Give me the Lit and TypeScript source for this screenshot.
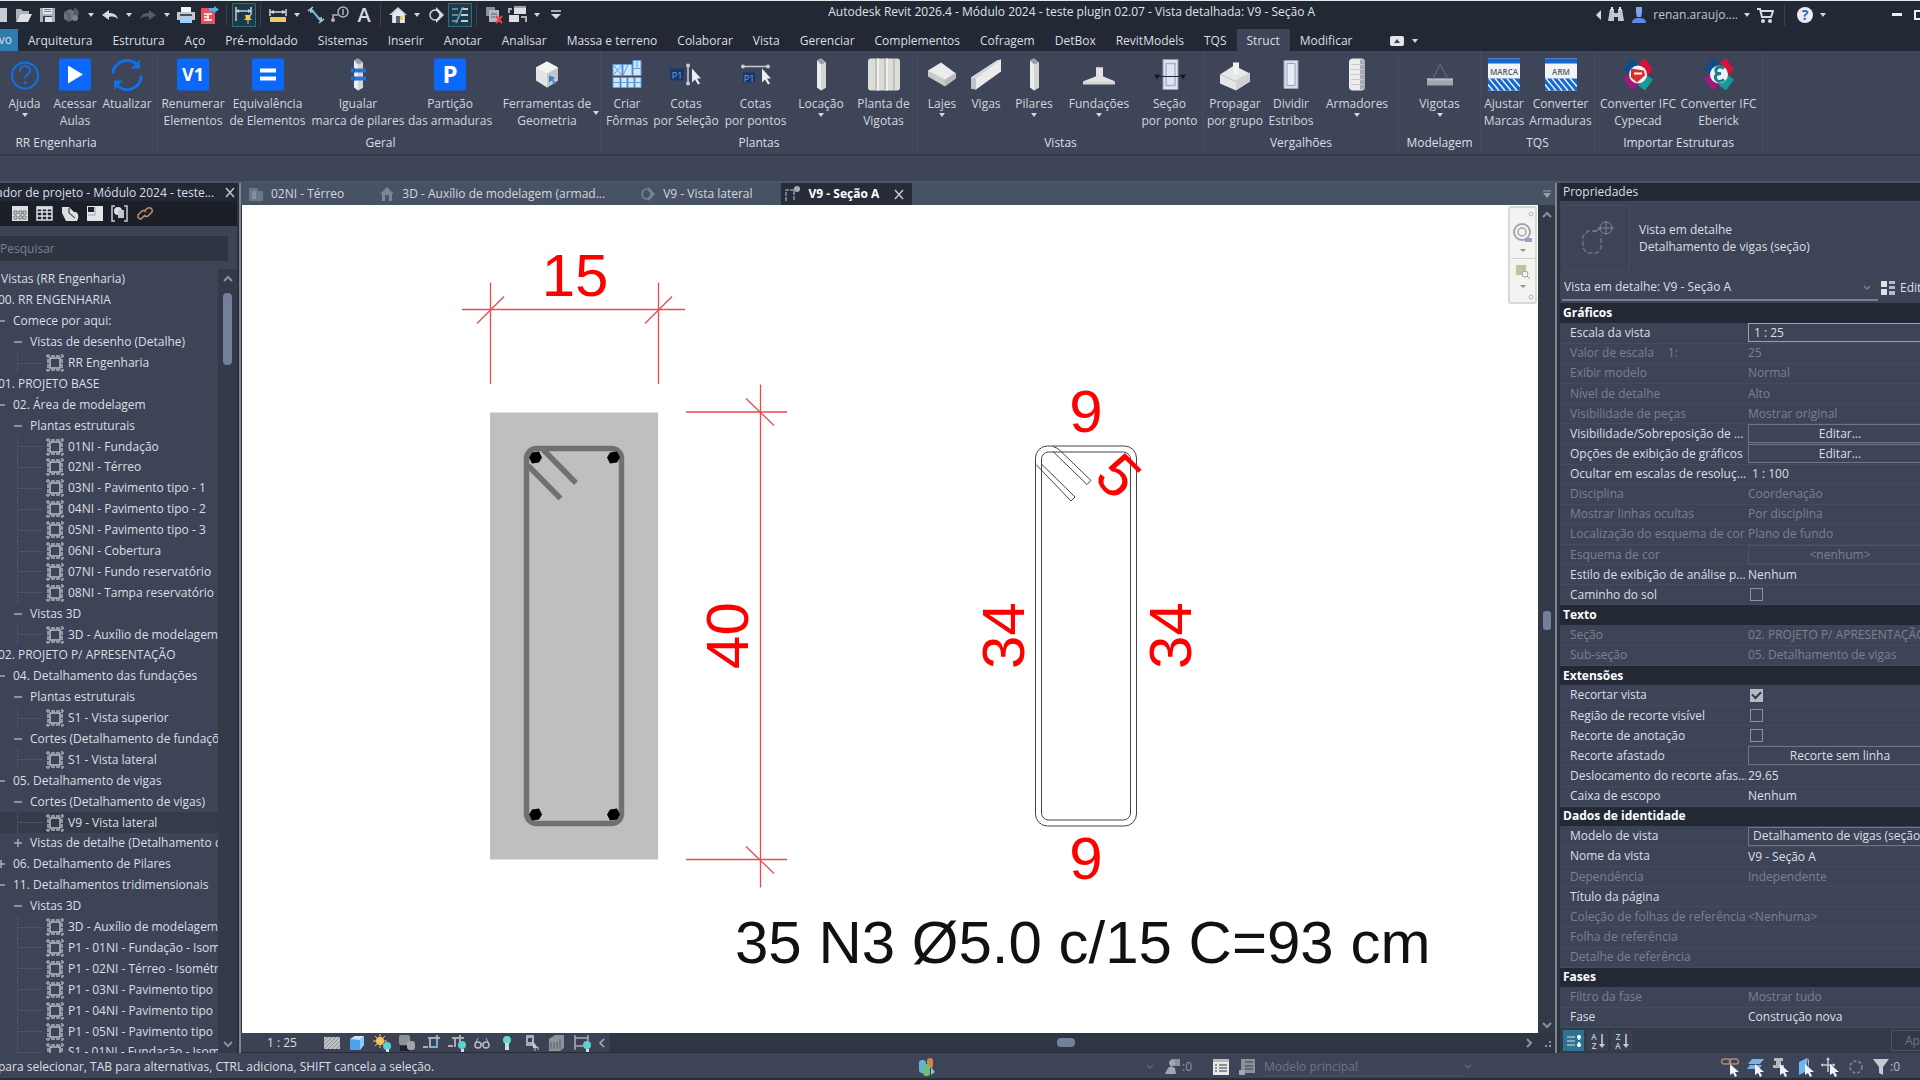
import { LitElement, html, svg, css, nothing } from "lit";
import { customElement } from "lit/decorators.js";
import { classMap } from "lit/directives/class-map.js";

/* ---------- icons ---------- */

const glyph = (w: number, h: number, body: unknown) =>
  html`<svg class="glyph" width=${w} height=${h} viewBox="0 0 ${w} ${h}" aria-hidden="true">${body}</svg>`;

const caret = () => glyph(6, 4, svg`<path d="M0 0h6L3 4z" fill="#d4d8df"/>`);

const q = {
  fresh: glyph(18, 18, svg`<path d="M4 2h9v14H4z" fill="#c9ccd2"/>`),
  open: glyph(18, 18, svg`<path d="M1 3h5l2 2h6v3H5l-4 7z" fill="#aeb3ba"/><path d="M5 8h12l-4 8H1z" fill="#dfe1e4"/>`),
  save: glyph(18, 18, svg`<path d="M1 2h15v14H1z" fill="#a9aeb6"/><path d="M4 2h9v6H4z" fill="#e4e6e8"/><path d="M5 3.500h7M5 5.500h7" stroke="#777d87"/><path d="M4 10h9v6H4z" fill="#3b414c"/><path d="M6 11h7v5H6z" fill="#dfe1e4"/>`),
  cube: glyph(20, 18, svg`<path d="M2 6l6-3 4 2v8l-5 3-5-3z" fill="#6c727d"/><path d="M12 2a5 5 0 0 1 4 8l-4 3V5z" fill="#545a66"/><path d="M2 6l5 2v8" stroke="#454b57" fill="none"/><circle cx="13" cy="12" r="3" fill="#7d838d"/>`),
  undo: glyph(18, 18, svg`<path d="M1 9l7-5v3c5 0 8 2 9 6-2-2-5-3-9-2v3z" fill="#d6d9de"/>`),
  redo: glyph(18, 18, svg`<path d="M17 9l-7-5v3c-5 0-8 2-9 6 2-2 5-3 9-2v3z" fill="#565c68"/>`),
  print: glyph(20, 20, svg`<path d="M5 2h10v6H5z" fill="#f1f3f5"/><path d="M1 7h18v8H1z" fill="#c4c8ce"/><path d="M4 9h12v2H4z" fill="#4b515c"/><path d="M4 12h12v6H4z" fill="#9ad2fb"/>`),
  pdf: glyph(20, 20, svg`<path d="M1 3h10l4 4v12H1z" fill="#e9505a"/><path d="M4 9h8M4 12h5M4 15h8M8 9v6" stroke="#fff" stroke-width="1.500"/><path d="M9 3h5V1l5 3.500-5 3.500V6H9z" fill="#4fb2ee"/>`),
  dim: glyph(20, 20, svg`<path d="M2 2v14M17 2v8M2 6h15" stroke="#c9cdd3" stroke-width="1.500" fill="none"/><path d="M2 6l3-2v4zM17 6l-3-2v4z" fill="#c9cdd3"/><path d="M11 10h6l-1 3 2 2h-8l2-2z" fill="#f5cf52"/><path d="M14 15v4" stroke="#f5cf52"/>`),
  measure: glyph(20, 18, svg`<path d="M2 3v7M18 3v7M3 6h14" stroke="#d6d9de" stroke-width="1.500"/><path d="M2 6l4-2v4zM18 6l-4-2v4z" fill="#d6d9de"/><path d="M2 11h16v5H2z" fill="#f0c860"/>`),
  align: glyph(18, 18, svg`<path d="M4 3l10 12" stroke="#6fb6dc" stroke-width="2"/><path d="M1 5l5-4M12 17l5-4" stroke="#c9cdd3" stroke-width="1.500"/><path d="M3 2l4 4-4 1zM15 16l-4-4 4-1z" fill="#8cc5e3"/>`),
  tag: glyph(20, 18, svg`<circle cx="13" cy="6" r="5" fill="none" stroke="#aeb3ba" stroke-width="1.500"/><path d="M13 3v6" stroke="#aeb3ba" stroke-width="1.500"/><path d="M3 15V9h5" stroke="#aeb3ba" fill="none" stroke-width="1.500"/><circle cx="3" cy="14" r="2" fill="#aeb3ba"/>`),
  letter: glyph(18, 18, svg`<text x="9" y="16" text-anchor="middle" font-family="Open Sans, sans-serif" font-size="20" font-weight="600" fill="#d6d9de">A</text>`),
  home: glyph(20, 20, svg`<path d="M10 2l9 8h-2v8H4v-8H1z" fill="#c9ccd1"/><path d="M10 4l6 5v9H5V9z" fill="#e8e9eb"/><path d="M8 11h4v7H8z" fill="#5b616c"/><path d="M12 11h3v4h-3z" fill="#f0cd62"/>`),
  section: glyph(18, 18, svg`<circle cx="8" cy="9" r="5" fill="none" stroke="#d6d9de" stroke-width="1.500"/><path d="M9 1l8 8-8 8v-3l4-5-4-5z" fill="#d6d9de"/>`),
  thin: glyph(20, 20, svg`<path d="M2 4h6M2 10h6M2 16h6" stroke="#c9cdd3"/><path d="M11 4h7M11 10h7M11 16h7" stroke="#c9cdd3" stroke-width="2"/><path d="M13 2L6 18" stroke="#57a7d6" stroke-width="1.500"/>`),
  closeWin: glyph(20, 20, svg`<path d="M2 2h9v9H2z" fill="#8c929c"/><path d="M5 5h10v12H5z" fill="#b4b8bf"/><path d="M7 9h6M7 12h4" stroke="#5b616c"/><path d="M12 11l6 7M18 11l-6 7" stroke="#e5434d" stroke-width="2"/>`),
  switchWin: glyph(20, 20, svg`<path d="M6 1h12v8H6z" fill="#dcdee1"/><path d="M1 10h10v7H1z" fill="#dcdee1"/><path d="M13 12h5v5M1 8V4h3" stroke="#aeb3ba" stroke-width="2" fill="none"/><path d="M6 1h12v2H6z" fill="#9ca1aa"/>`),
  custom: glyph(10, 10, svg`<path d="M0 1h10" stroke="#d6d9de" stroke-width="1.500"/><path d="M0 4h10L5 9z" fill="#d6d9de"/>`),
};

const u = {
  left: glyph(6, 10, svg`<path d="M6 0v10L1 5z" fill="#d6d9de"/>`),
  search: glyph(18, 18, svg`<path d="M3 3h4v4h4V3h4l2 12h-6v-4H7v4H1z" fill="#c3c7cd"/><path d="M4 1h2v3H4zM12 1h2v3h-2z" fill="#e5e7ea"/>`),
  user: glyph(16, 18, svg`<path d="M5 1h6v6l-1 4H6L5 7z" fill="#7ca3f0"/><path d="M1 17c0-4 3-5 7-5s7 1 7 5z" fill="#5d8ae6"/>`),
  cart: glyph(18, 18, svg`<path d="M1 3h3l2 8h9l2-6H5" fill="none" stroke="#d6d9de" stroke-width="2"/><circle cx="7" cy="15" r="2" fill="#d6d9de"/><circle cx="14" cy="15" r="2" fill="#d6d9de"/>`),
  help: glyph(18, 18, svg`<circle cx="9" cy="9" r="8" fill="#e9edf5"/><text x="9" y="14" text-anchor="middle" font-family="Open Sans, sans-serif" font-size="14" font-weight="700" fill="#3565c4">?</text>`),
  min: glyph(10, 4, svg`<path d="M0 0h10v3H0z" fill="#eceef0"/>`),
  max: glyph(10, 10, svg`<path d="M1 1h8v8H1z" fill="none" stroke="#eceef0" stroke-width="2"/>`),
};

const tile = (body: unknown) => svg`<rect width="32" height="32" rx="2" fill="#0a69fb"/>${body}`;
const tileText = (t: string, size: number) =>
  tile(svg`<text x="16" y=${16 + size * 0.36} text-anchor="middle" font-family="Open Sans, sans-serif" font-weight="700" font-size=${size} fill="#fff">${t}</text>`);
const column = svg`<path d="M12 2l4-2 5 4v25l-5 3-4-3z" fill="#eceded"/><path d="M16 5l5-1v25l-5 3z" fill="#d3d5d6"/><path d="M12 2l4-2 5 4-5 2z" fill="#9b9fa5"/>`;
const pointer = svg`<path d="M22 10v14l3-3 3 5 2-1-3-5h4z" fill="#e8eef5"/>`;
const tqs = (t: string) => svg`<path d="M0 0h32v32H0z" fill="#f2f4f6"/><path d="M0 0h32v5H0z" fill="#1467cf"/>
  <text x="16" y="16" text-anchor="middle" font-family="Open Sans, sans-serif" font-weight="600" font-size="8" fill="#555b66">${t}</text>
  <path d="M0 20h32v12H0z" fill="#1467cf"/><path d="M1 20l10 12M7 20l10 12M13 20l10 12M19 20l10 12M25 20l7 8M0 26l5 6" stroke="#e8effa" stroke-width="1.500"/>`;
const ifc = (body: unknown) => svg`<path d="M1 11L9 0l7 4-7 12z" fill="#0f4c8c"/><path d="M17 4l6-4 8 11-6 6z" fill="#d9103c"/>
  <path d="M1 20l6-4 9 10-6 6z" fill="#a3177f"/><path d="M16 27l8-11 7 5-8 11z" fill="#159a97"/><circle cx="16" cy="16" r="9" fill="#eef2f3"/>${body}`;

const r = {
  help: svg`<circle cx="16" cy="17" r="13" fill="none" stroke="#0d72ea" stroke-width="2"/><path d="M11 13c0-7 10-7 10-1 0 4-5 4-5 8" fill="none" stroke="#0d72ea" stroke-width="2"/><circle cx="16" cy="24" r="1.500" fill="#0d72ea"/>`,
  play: tile(svg`<path d="M9 7l15 9-15 9z" fill="#fff"/>`),
  refresh: svg`<path d="M2 15A14 13 0 0 1 26 6M30 17A14 13 0 0 1 6 27" fill="none" stroke="#0d72ea" stroke-width="3"/><path d="M29 1v9h-9zM3 31v-9h9z" fill="#0d72ea"/>`,
  v1: tileText("V1", 18),
  equal: tile(svg`<path d="M8 10h16v4H8zM8 18h16v4H8z" fill="#fff"/>`),
  match: svg`${column}<path d="M9 10h15v4H9zM9 18h15v4H9z" fill="#2a72cf"/><path d="M11 10h2v4h-2zM11 18h2v4h-2z" fill="#1d5db2"/>`,
  part: tileText("P", 24),
  geometry: svg`<path d="M5 9l11-6 11 6v13l-11 7-11-7z" fill="#e3e4e5"/><path d="M16 15l11-6v13l-11 7z" fill="#c3c5c7"/><path d="M5 9l11-6 11 6-11 6z" fill="#f3f3f3"/><path d="M18 17l6 2-2 2 3 4-2 1-2-4-3 2z" fill="#3a7fd4"/>`,
  forms: svg`<path d="M2 6h9v11H2zM12 6h9v11h-9zM22 2h8v15h-8zM2 19h7v10H2zM10 19h6v10h-6zM17 19h6v10h-6zM24 19h6v10h-6z" fill="#cfe6fb" stroke="#5f9fe0"/><path d="M2 6l9 11M11 6L2 17M17 6l-5 11M22 10h8M2 24h28M26 2v8" stroke="#5f9fe0" fill="none"/>`,
  dimSel: svg`<path d="M0 10h14v12H0z" fill="#15396f"/><text x="7" y="20" text-anchor="middle" font-family="Open Sans, sans-serif" font-size="9" fill="#7da3d8">P1</text><path d="M18 7v18" stroke="#c9cdd3" stroke-width="1.500"/><circle cx="18" cy="7" r="2" fill="#c9cdd3"/><circle cx="18" cy="25" r="2" fill="#c9cdd3"/>${pointer}`,
  dimPts: svg`<path d="M3 14h12v10H3z" fill="#15396f"/><text x="9" y="23" text-anchor="middle" font-family="Open Sans, sans-serif" font-size="9" fill="#7da3d8">P1</text><path d="M3 8h26" stroke="#c9cdd3" stroke-width="1.500"/><circle cx="3" cy="8" r="2" fill="#c9cdd3"/><circle cx="28" cy="8" r="2" fill="#c9cdd3"/>${pointer}`,
  column,
  slab: svg`<rect width="32" height="32" rx="3" fill="#dcdcd9"/><path d="M8 0v32M17 0v32M26 0v32" stroke="#a6a6a3"/><path d="M10 0v32M19 0v32" stroke="#f0f0ee" stroke-width="2"/>`,
  plate: svg`<path d="M2 12l13-8 15 11v3l-11 9L2 17z" fill="#ececec"/><path d="M2 12l17 9v7L2 18z" fill="#c9cacb"/><path d="M19 21l11-7v6l-11 8z" fill="#b9bbbd"/>`,
  beam: svg`<path d="M1 19L27 2l4-1v12L6 31l-5-1z" fill="#ebebeb"/><path d="M1 19l5 1v11l-5-1z" fill="#bfc1c4"/><path d="M1 19L27 2l4-1-25 19z" fill="#d4d5d6"/>`,
  footing: svg`<path d="M13 9h7v9l12 5v3H0v-3l13-5z" fill="#d5d6d3"/><path d="M13 9h7v9l12 5H0l13-5z" fill="#e3e4e0"/>`,
  cut: svg`<path d="M9 1h15v30H9z" fill="#dfe5ee" stroke="#8e9ab0"/><path d="M12 5h9v22h-9z" fill="none" stroke="#9db3d6" stroke-width="1.500"/><path d="M2 18h28" stroke="#22262e"/><path d="M0 16h6l-3 5zM26 16h6l-3 5z" fill="#15181e"/>`,
  spread: svg`<path d="M1 16l14-9 16 8v8l-14 9L1 25z" fill="#e6e7e8"/><path d="M17 22l14-8v9l-14 8z" fill="#cfd1d3"/><path d="M14 4h6v12h-6z" fill="#f2f2f2"/><path d="M1 16l16 7" stroke="#bfc2c5" fill="none"/>`,
  split: svg`<path d="M9 2h14v28H9z" fill="#d9dfea" stroke="#9aa4b5"/><path d="M12 5h8v22h-8z" fill="#e9edf4" stroke="#8fa3c6"/>`,
  rebar: svg`<rect x="8" width="16" height="32" rx="4" fill="#ececec"/><path d="M19 1h3c2 1 2 2 2 3v24c0 2-1 3-3 3h-2z" fill="#a9acb0"/><path d="M10 6h13M10 11h13M10 16h13M10 21h13M10 26h13" stroke="#c6c8cb"/>`,
  joist: svg`<path d="M3 20h26v7H3z" fill="#a3a6a8"/><path d="M3 20h26v2H3z" fill="#b9bbbd"/><path d="M9 20l7-14 8 14" stroke="#5c6272" fill="none" stroke-width="1.500"/>`,
  marca: tqs("MARCA"),
  arm: tqs("ARM"),
  cype: ifc(svg`<path d="M9 10l13 2 1 5-8 7-6-5z" fill="#d3322f"/><path d="M12 15h8" stroke="#fff" stroke-width="2"/>`),
  eberick: ifc(svg`<path d="M21 10c-4-3-9-1-8 3 0 2 3 2 5 2-4 0-7 2-5 6 2 3 6 2 8 0" fill="none" stroke="#17818a" stroke-width="3"/>`),
};

const v = {
  hatch: glyph(18, 14, svg`<path d="M1 1h16v12H1z" fill="#bfc1c4"/><path d="M1 5l4-4M1 9l8-8M1 13L13 1M5 13L17 1M9 13l8-8M13 13l4-4" stroke="#8b8e93"/>`),
  box: glyph(18, 18, svg`<path d="M2 5l5-3h9v9l-4 5H2z" fill="#4aa3ec"/><path d="M2 5l5-3h9l-4 4z" fill="#c7e6fd"/><path d="M12 6l4-4v9l-4 5z" fill="#8fc8f6"/>`),
  sun: glyph(18, 18, svg`<circle cx="7" cy="7" r="4" fill="#f2c65c"/><path d="M7 0v14M0 7h14M2 2l10 10M12 2L2 12" stroke="#f2c65c"/><circle cx="14" cy="12" r="4" fill="#5fd0cf"/><path d="M13 15h3v3h-3z" fill="#d9dcdf"/>`),
  shade: glyph(18, 18, svg`<rect x="1" y="1" width="11" height="10" rx="2" fill="#8e9196"/><path d="M2 12h10v5H2z" fill="#1d2129"/><rect x="9" y="7" width="8" height="9" rx="3" fill="#a0a3a8"/>`),
  crop: glyph(18, 18, svg`<path d="M5 4h12M7 3v10h8M14 1v12M5 13H0" stroke="#a9adb4" stroke-width="2" fill="none"/><path d="M14 6v7H8" stroke="#59b4e4" fill="none" stroke-width="1.500"/>`),
  cropOn: glyph(18, 18, svg`<path d="M4 4h12M7 3v10M5 12H0M12 1v7" stroke="#a9adb4" stroke-width="2" fill="none"/><circle cx="14" cy="11" r="4" fill="#5fd0cf"/><path d="M13 15h3v3h-3z" fill="#d9dcdf"/>`),
  glasses: glyph(18, 18, svg`<circle cx="5" cy="11" r="3" fill="none" stroke="#b8bcc2" stroke-width="1.500"/><circle cx="13" cy="11" r="3" fill="none" stroke="#b8bcc2" stroke-width="1.500"/><path d="M3 8l2-4M15 8l-2-4M8 10h2" stroke="#b8bcc2"/>`),
  bulb: glyph(18, 18, svg`<circle cx="9" cy="6" r="4" fill="#6bd6cf"/><path d="M7 9h4v6H7z" fill="#b9e3df"/><path d="M7 13h4v3H7z" fill="#d9dcdf"/>`),
  locked: glyph(18, 18, svg`<path d="M3 1h8v11H3z" fill="#a9adb4"/><path d="M5 4h4v4H5z" fill="#3c4250"/><path d="M9 6l6 8h-5z" fill="#c6c9ce"/><path d="M12 14v3M15 13v3" stroke="#c6c9ce"/>`),
  model: glyph(18, 18, svg`<path d="M1 5l6-4h9v13l-4 3H1z" fill="#8e9299"/><path d="M3 8v7M6 8v7M9 8v7M12 5v10" stroke="#575c67"/>`),
  constrain: glyph(18, 18, svg`<path d="M2 1v15M15 1v6M2 4h13M2 12h8" stroke="#a9adb4" stroke-width="1.500" fill="none"/><circle cx="14" cy="11" r="4" fill="#5fd0cf"/><path d="M13 15h3v3h-3z" fill="#d9dcdf"/>`),
};

const arrow = svg`<path d="M9 7v11l3-2 2 4 2-1-2-4h4z" fill="#f1f3f5"/>`;
const s = {
  links: glyph(20, 20, svg`<path d="M3 2h4a2 2 0 0 1 0 5H3a2 2 0 0 1 0-5M11 2h4a2 2 0 0 1 0 5h-4a2 2 0 0 1 0-5" stroke="#b48a6f" fill="none" stroke-width="1.500"/>${arrow}`),
  under: glyph(20, 20, svg`<path d="M6 2h12l-4 5H2zM4 8h12l-3 4H1z" fill="#74b4ea"/>${arrow}`),
  pinned: glyph(20, 20, svg`<path d="M3 1h9v3h-2v4h3v3H2V8h3V4H3z" fill="#b5b9c0"/>${arrow}`),
  face: glyph(20, 20, svg`<path d="M3 5l8-4v13l-8 4z" fill="#6fb7ef"/><path d="M11 1l2 2v9" fill="#b5b9c0"/>${arrow}`),
  drag: glyph(20, 20, svg`<path d="M7 1v14M0 8h14" stroke="#c6c9ce" stroke-width="1.500"/><path d="M5 3l2-3 2 3zM2 6L0 8l2 2zM12 6l2 2-2 2z" fill="#c6c9ce"/>${arrow}`),
  ring: glyph(20, 20, svg`<circle cx="10" cy="10" r="6" fill="none" stroke="#747a88" stroke-width="2" stroke-dasharray="3 2"/>`),
  funnel: glyph(20, 20, svg`<path d="M2 2h16l-6 8v8l-4-2v-6z" fill="#c6c9ce"/>`),
  people: glyph(18, 20, svg`<rect x="1" y="3" width="7" height="13" rx="3" fill="#6aaede"/><rect x="9" y="1" width="6" height="10" rx="3" fill="#d9814f"/><rect x="5" y="7" width="7" height="12" rx="3" fill="#69c07a"/><path d="M13 10l4 5-4 3z" fill="#a3b7c6"/>`),
  figure: glyph(18, 20, svg`<path d="M7 2h9v7H8z" fill="#8b909b"/><path d="M1 17l3-6 3-2 4 2 1 6z" fill="#a3a7b0"/><circle cx="8" cy="6" r="3" fill="#a3a7b0"/>`),
  sheet: glyph(18, 18, svg`<path d="M1 1h16v16H1z" fill="#e6e8e6"/><path d="M1 1h16v3H1z" fill="#b9bcbc"/><path d="M3 7h2M3 10h2M3 13h2M7 7h8M7 10h8M7 13h8" stroke="#6d7275" stroke-width="1.500"/>`),
  sheetOff: glyph(18, 18, svg`<path d="M3 1h14v14H3z" fill="#8b909b"/><path d="M7 4h8M7 8h8M7 11h8" stroke="#535969" stroke-width="1.500"/><path d="M1 12h6v5H1z" fill="#a3a7b0"/>`),
};

const p = {
  grid: glyph(18, 18, svg`<path d="M1 1h16v15H1z" fill="#dcdedf"/><path d="M3 6h3v3H3zM8 6h3v3H8zM12 6h3v3h-3zM3 11h3v3H3zM8 11h3v3H8zM12 11h3v3h-3z" fill="none" stroke="#6b7078"/>`),
  table: glyph(18, 18, svg`<path d="M1 2h15v13H1z" fill="none" stroke="#dcdedf" stroke-width="1.500"/><path d="M1 3h15" stroke="#dcdedf" stroke-width="3"/><path d="M1 7h15M1 11h15M6 3v12M11 3v12" stroke="#dcdedf" stroke-width="1.500"/>`),
  sheet: glyph(18, 18, svg`<path d="M1 2h7l5 5h2c3 2 3 6 1 9H5L1 8z" fill="#dcdedf"/><path d="M8 3v5l6 5" fill="none" stroke="#1c212b"/>`),
  family: glyph(18, 18, svg`<path d="M1 1h16v15H1z" fill="#e3e4e5"/><path d="M2 2h6v5H2z" fill="#1c212b"/><path d="M9 2v8H2" stroke="#9b9fa5" fill="none"/>`),
  group: glyph(18, 18, svg`<path d="M4 1H1v15h3M13 1h3v15h-3" fill="none" stroke="#c9ccd1" stroke-width="1.500"/><circle cx="7" cy="6" r="4" fill="#dcdedf"/><path d="M7 5h6v8H7z" fill="#c3c6cb"/>`),
  link: glyph(18, 18, svg`<path d="M8 11l-3 3a3 3 0 0 1-3-4l4-4a3 3 0 0 1 4 1M8 6l4-3a3 3 0 0 1 4 4l-4 4a3 3 0 0 1-4-1" stroke="#c28d6d" stroke-width="1.500" fill="none"/>`),
  view: glyph(18, 18, svg`<path d="M4 4h10v10H4z" fill="none" stroke="#b9bdc6" stroke-width="1.500"/><path d="M0 2h18M0 16h18M2 0v18M16 0v18" stroke="#9196a4" stroke-width="2" stroke-dasharray="4 1"/>`),
};

/* ---------- data ---------- */

type Tool = { icon: unknown; lines: string[]; drop?: boolean; side?: boolean };
const t = (icon: unknown, label: string, drop = false, side = false): Tool => ({ icon, lines: label.split("|"), drop, side });

const RIBBON: { key: string; title: string; tools: Tool[] }[] = [
  { key: "rr", title: "RR Engenharia", tools: [t(r.help, "Ajuda", true), t(r.play, "Acessar|Aulas"), t(r.refresh, "Atualizar")] },
  { key: "geral", title: "Geral", tools: [t(r.v1, "Renumerar|Elementos"), t(r.equal, "Equivalência|de Elementos"), t(r.match, "Igualar|marca de pilares"), t(r.part, "Partição|das armaduras"), t(r.geometry, "Ferramentas de|Geometria", false, true)] },
  { key: "plantas", title: "Plantas", tools: [t(r.forms, "Criar|Fôrmas"), t(r.dimSel, "Cotas|por Seleção"), t(r.dimPts, "Cotas|por pontos"), t(r.column, "Locação", true), t(r.slab, "Planta de|Vigotas")] },
  { key: "vistas", title: "Vistas", tools: [t(r.plate, "Lajes", true), t(r.beam, "Vigas"), t(r.column, "Pilares", true), t(r.footing, "Fundações", true), t(r.cut, "Seção|por ponto")] },
  { key: "vergalhoes", title: "Vergalhões", tools: [t(r.spread, "Propagar|por grupo"), t(r.split, "Dividir|Estribos"), t(r.rebar, "Armadores", true)] },
  { key: "modelagem", title: "Modelagem", tools: [t(r.joist, "Vigotas", true)] },
  { key: "tqs", title: "TQS", tools: [t(r.marca, "Ajustar|Marcas"), t(r.arm, "Converter|Armaduras")] },
  { key: "importar", title: "Importar Estruturas", tools: [t(r.cype, "Converter IFC|Cypecad"), t(r.eberick, "Converter IFC|Eberick")] },
];

const TABS = ["Arquitetura", "Estrutura", "Aço", "Pré-moldado", "Sistemas", "Inserir", "Anotar", "Analisar", "Massa e terreno", "Colaborar", "Vista", "Gerenciar", "Complementos", "Cofragem", "DetBox", "RevitModels", "TQS", "Struct", "Modificar"];

type Node = [level: number, label: string, mark?: string];
const TREE: Node[] = [
  [0, "Vistas (RR Engenharia)"], [1, "00. RR ENGENHARIA"], [2, "Comece por aqui:"], [3, "Vistas de desenho (Detalhe)"], [4, "RR Engenharia"],
  [1, "01. PROJETO BASE"], [2, "02. Área de modelagem"], [3, "Plantas estruturais"],
  [4, "01NI - Fundação"], [4, "02NI - Térreo"], [4, "03NI - Pavimento tipo - 1"], [4, "04NI - Pavimento tipo - 2"], [4, "05NI - Pavimento tipo - 3"],
  [4, "06NI - Cobertura"], [4, "07NI - Fundo reservatório"], [4, "08NI - Tampa reservatório"],
  [3, "Vistas 3D"], [4, "3D - Auxílio de modelagem"],
  [1, "02. PROJETO P/ APRESENTAÇÃO"], [2, "04. Detalhamento das fundações"], [3, "Plantas estruturais"], [4, "S1 - Vista superior"],
  [3, "Cortes (Detalhamento de fundações)"], [4, "S1 - Vista lateral"],
  [2, "05. Detalhamento de vigas"], [3, "Cortes (Detalhamento de vigas)"], [4, "V9 - Vista lateral", "on"], [3, "Vistas de detalhe (Detalhamento de vigas)", "+"],
  [2, "06. Detalhamento de Pilares", "+"], [2, "11. Detalhamentos tridimensionais"], [3, "Vistas 3D"],
  [4, "3D - Auxílio de modelagem"], [4, "P1 - 01NI - Fundação - Isométrica"], [4, "P1 - 02NI - Térreo - Isométrica"],
  [4, "P1 - 03NI - Pavimento tipo"], [4, "P1 - 04NI - Pavimento tipo"], [4, "P1 - 05NI - Pavimento tipo"], [4, "S1 - 01NI - Fundação - Isométrica"],
];

type Prop = { name: string; value?: string; kind?: "text" | "button" | "left" | "check" | "select" | "input"; off?: boolean; on?: boolean; unit?: string; pad?: boolean };
const PROPS: { title: string; rows: Prop[] }[] = [
  { title: "Gráficos", rows: [
    { name: "Escala da vista", value: "1 : 25", kind: "select" },
    { name: "Valor de escala", unit: "1:", value: "25", off: true },
    { name: "Exibir modelo", value: "Normal", off: true },
    { name: "Nível de detalhe", value: "Alto", off: true },
    { name: "Visibilidade de peças", value: "Mostrar original", off: true },
    { name: "Visibilidade/Sobreposição de ...", value: "Editar...", kind: "button" },
    { name: "Opções de exibição de gráficos", value: "Editar...", kind: "button" },
    { name: "Ocultar em escalas de resoluç...", value: "1 : 100", pad: true },
    { name: "Disciplina", value: "Coordenação", off: true },
    { name: "Mostrar linhas ocultas", value: "Por disciplina", off: true },
    { name: "Localização do esquema de cor", value: "Plano de fundo", off: true },
    { name: "Esquema de cor", value: "<nenhum>", kind: "button", off: true },
    { name: "Estilo de exibição de análise p...", value: "Nenhum" },
    { name: "Caminho do sol", kind: "check" },
  ] },
  { title: "Texto", rows: [
    { name: "Seção", value: "02. PROJETO P/ APRESENTAÇÃO", off: true },
    { name: "Sub-seção", value: "05. Detalhamento de vigas", off: true },
  ] },
  { title: "Extensões", rows: [
    { name: "Recortar vista", kind: "check", on: true },
    { name: "Região de recorte visível", kind: "check" },
    { name: "Recorte de anotação", kind: "check" },
    { name: "Recorte afastado", value: "Recorte sem linha", kind: "button" },
    { name: "Deslocamento do recorte afas...", value: "29.65", kind: "input" },
    { name: "Caixa de escopo", value: "Nenhum" },
  ] },
  { title: "Dados de identidade", rows: [
    { name: "Modelo de vista", value: "Detalhamento de vigas (seção)", kind: "left" },
    { name: "Nome da vista", value: "V9 - Seção A", kind: "input" },
    { name: "Dependência", value: "Independente", off: true },
    { name: "Título da página", value: "", kind: "input" },
    { name: "Coleção de folhas de referência", value: "<Nenhuma>", off: true },
    { name: "Folha de referência", value: "", off: true },
    { name: "Detalhe de referência", value: "", off: true },
  ] },
  { title: "Fases", rows: [
    { name: "Filtro da fase", value: "Mostrar tudo", off: true },
    { name: "Fase", value: "Construção nova" },
  ] },
];

const base = css`
  * { box-sizing: border-box; }
  :host { font: 12px/16px "Open Sans", "Noto Sans", sans-serif; color: #dcdfe5; }
  button, input, select { font: inherit; color: inherit; background: none; border: 0; margin: 0; padding: 0; border-radius: 0; outline: 0; }
  button { display: flex; align-items: center; justify-content: center; white-space: nowrap; }
  .glyph { display: block; flex: none; }
`;

/* ---------- title bar, tabs and ribbon ---------- */

@customElement("top-bar")
export class TopBar extends LitElement {
  static styles = [base, css`
    :host { display: block; border-top: 1px solid #dfeceb; background: #222934; overflow: hidden; }
    .title { display: flex; align-items: center; height: 28px; }
    .quick { display: flex; align-items: center; flex: none; }
    .quick button { width: 24px; height: 24px; }
    .quick .caret { width: 14px; }
    .quick .cut { width: 12px; overflow: hidden; justify-content: flex-end; }
    .quick .boxed { border: 1px solid #2f6c82; background: #1d3a47; }
    .bar { flex: none; width: 1px; height: 22px; margin: 0 5px 0 4px; background: #3a414d; }
    .name { flex: 1; text-align: center; white-space: nowrap; padding: 0 20px 6px 0; color: #dfe2e7; }
    .user { display: flex; align-items: center; flex: none; gap: 6px; color: #c3c7cf; }
    .user .wide { margin-left: 60px; }
    .user .edge { width: 12px; overflow: hidden; justify-content: flex-start; padding-left: 6px; }
    .tabs { display: flex; height: 22px; align-items: stretch; }
    .tabs button { padding: 1px 10px 0; flex: none; }
    .tabs .file { background: #2f7cae; padding: 0 6px 0 0; width: 18px; justify-content: flex-end; overflow: hidden; }
    .tabs .on { background: #3f4558; }
    .tabs .panel { gap: 8px; padding-left: 28px; }
    .ribbon { display: flex; height: 105px; background: #3f4558; border-bottom: 2px solid #343a49; overflow: hidden; }
    .group { display: grid; grid-template-rows: 84px 16px; flex: none; border-right: 1px solid #464c60; }
    .tools { display: grid; align-items: start; }
    .tool { flex-direction: column; justify-content: flex-start; padding-top: 7px; width: 100%; position: relative; }
    .tool .label { display: block; line-height: 17px; margin-top: 4px; text-align: center; color: #d3d6de; }
    .tool .label span { display: block; }
    .tool .down { margin-top: 1px; }
    .tool .side { position: absolute; right: 1px; bottom: 14px; }
    .caption { text-align: center; }
    .rr { margin-left: -45px; padding-left: 45px; width: 203px; }
    .rr .caption { margin-left: -45px; }
    .rr .tools { grid-template-columns: 49px 52px 52px; }
    .geral { padding-left: 3px; width: 443px; }
    .geral .tools { grid-template-columns: 64px 85px 96px 88px 106px; }
    .plantas .tools { grid-template-columns: 52px 66px 73px 58px 67px; }
    .vistas .tools { grid-template-columns: 48px 40px 56px 74px 67px; }
    .vergalhoes .tools { grid-template-columns: 62px 50px 82px; }
    .modelagem .tools { grid-template-columns: 81px; }
    .tqs .tools { grid-template-columns: 46px 67px; }
    .importar { padding: 0 3px; }
    .importar .tools { grid-template-columns: 80px 81px; }
    .options { height: 27px; background: #3f4558; border-bottom: 2px solid #4c5467; }
  `];

  private quick(icon: unknown, name: string, cls = "") {
    return html`<button class=${cls} aria-label=${name}>${icon}</button>`;
  }
  private more() {
    return this.quick(caret(), "Mais opções", "caret");
  }

  render() {
    return html`
      <header class="title">
        <div class="quick">
          ${this.quick(q.fresh, "Novo", "cut")}${this.quick(q.open, "Abrir")}${this.quick(q.save, "Salvar")}${this.quick(q.cube, "Sincronizar")}${this.more()}
          ${this.quick(q.undo, "Desfazer")}${this.more()}${this.quick(q.redo, "Refazer")}${this.more()}
          ${this.quick(q.print, "Imprimir")}${this.quick(q.pdf, "Exportar PDF")}<i class="bar"></i>
          ${this.quick(q.dim, "Restrições", "boxed")}<i class="bar"></i>
          ${this.quick(q.measure, "Medir")}${this.more()}${this.quick(q.align, "Cota alinhada")}${this.quick(q.tag, "Identificador")}${this.quick(q.letter, "Texto")}<i class="bar"></i>
          ${this.quick(q.home, "Vista 3D")}${this.more()}${this.quick(q.section, "Corte")}${this.quick(q.thin, "Linhas finas", "boxed")}<i class="bar"></i>
          ${this.quick(q.closeWin, "Fechar janelas")}${this.quick(q.switchWin, "Alternar janelas")}${this.more()}${this.quick(q.custom, "Personalizar")}
        </div>
        <div class="name">Autodesk Revit 2026.4 - Módulo 2024 - teste plugin 02.07 - Vista detalhada: V9 - Seção A</div>
        <div class="user">
          <button aria-label="Recolher">${u.left}</button>
          <button aria-label="Pesquisar">${u.search}</button>
          <button aria-label="Conta">${u.user}</button>
          <button>renan.araujo....</button>
          <button aria-label="Menu da conta">${caret()}</button>
          <button aria-label="Loja">${u.cart}</button><i class="bar"></i>
          <button aria-label="Ajuda">${u.help}</button>
          <button aria-label="Menu de ajuda">${caret()}</button>
          <button class="wide" aria-label="Minimizar">${u.min}</button>
          <button class="edge" aria-label="Maximizar">${u.max}</button>
        </div>
      </header>
      <nav class="tabs">
        <button class="file" aria-label="Arquivo">Arquivo</button>
        ${TABS.map((name) => html`<button class=${classMap({ on: name === "Struct" })}>${name}</button>`)}
        <button class="panel" aria-label="Estado da faixa">
          ${glyph(14, 10, svg`<rect width="14" height="10" rx="2" fill="#e3e5e8"/><path d="M4 7l3-4 3 4z" fill="#3c424e"/>`)}${caret()}
        </button>
      </nav>
      <section class="ribbon">
        ${RIBBON.map((g) => html`
          <div class="group ${g.key}">
            <div class="tools">
              ${g.tools.map((x) => html`
                <button class="tool">
                  <svg class="glyph" width="32" height="33" viewBox="0 0 32 32" aria-hidden="true">${x.icon}</svg>
                  <span class="label">${x.lines.map((l) => html`<span>${l}</span>`)}</span>
                  ${x.drop ? html`<span class="down">${caret()}</span>` : nothing}
                  ${x.side ? html`<span class="side">${caret()}</span>` : nothing}
                </button>`)}
            </div>
            <div class="caption">${g.title}</div>
          </div>`)}
      </section>
      <div class="options"></div>`;
  }
}

/* ---------- project browser ---------- */

@customElement("project-browser")
export class ProjectBrowser extends LitElement {
  static styles = [base, css`
    :host { display: flex; flex-direction: column; min-height: 0; overflow: hidden; background: #3e4457; border-right: 2px solid #2b313d; }
    .head { display: flex; align-items: center; justify-content: space-between; height: 18px; background: #222834; padding-right: 2px; padding-top: 1px; white-space: nowrap; }
    .head span { margin-left: -4px; }
    .icons { display: flex; align-items: center; gap: 7px; height: 25px; background: #1a1f28; padding-left: 11px; margin-bottom: 10px; flex: none; }
    .search { flex: none; width: auto; height: 25px; margin: 0 9px 8px 0; background: #2e3441; color: #d9dce2; }
    .search::placeholder { color: #7b8190; opacity: 1; }
    .body { flex: 1; display: flex; min-height: 0; }
    .clip { flex: 1; min-width: 0; overflow: hidden; }
    .tree { list-style: none; margin: 0 0 0 -24px; padding: 0; height: calc(100% + 10px); display: flex; flex-direction: column; }
    .row { flex: 1 1 0; min-height: 0; display: flex; align-items: center; white-space: nowrap; gap: 7px; }
    .l0 { padding-left: 25px; }
    .l1 { padding-left: 22px; }
    .l2 { padding-left: 20px; }
    .l3 { padding-left: 37px; }
    .l4 { padding-left: 41px; gap: 4px; }
    .on { background: #343c4a; }
    .guide { align-self: stretch; width: 25px; border-left: 1px dotted #596072; background: linear-gradient(#4d5467, #4d5467) center / 100% 1px no-repeat; flex: none; }
    .scroll { flex: none; width: 19px; background: #343a47; display: flex; flex-direction: column; align-items: center; padding: 6px 0 5px; }
    .thumb { width: 9px; height: 72px; border-radius: 4px; background: #74809a; margin-top: 11px; margin-bottom: auto; }
  `];

  render() {
    return html`
      <div class="head"><span>ador de projeto - Módulo 2024 - teste...</span>
        <button aria-label="Fechar">${glyph(10, 11, svg`<path d="M1 1l8 9M9 1L1 10" stroke="#c3c7cf" stroke-width="1.500"/>`)}</button></div>
      <div class="icons">${[p.grid, p.table, p.sheet, p.family, p.group, p.link].map((i) => html`<button aria-label="Filtro">${i}</button>`)}</div>
      <input class="search" type="search" placeholder="Pesquisar" aria-label="Pesquisar" />
      <div class="body">
        <div class="clip">
          <ul class="tree">
            ${TREE.map(([level, label, mark]) => html`
              <li class="row l${level} ${mark === "on" ? "on" : ""}">
                ${level === 4 ? html`<i class="guide"></i>${p.view}` : nothing}
                ${level === 2 || level === 3
                  ? glyph(10, 10, svg`<path d=${mark === "+" ? "M1 5h8M5 1v8" : "M1 5h8"} stroke="#a7acb8" stroke-width="1.500"/>`)
                  : nothing}
                <span>${label}</span>
              </li>`)}
          </ul>
        </div>
        <div class="scroll">
          ${glyph(10, 7, svg`<path d="M1 6l4-4 4 4" fill="none" stroke="#8b92a3" stroke-width="2"/>`)}
          <i class="thumb"></i>
          ${glyph(10, 7, svg`<path d="M1 1l4 4 4-4" fill="none" stroke="#8b92a3" stroke-width="2"/>`)}
        </div>
      </div>`;
  }
}

/* ---------- drawing area ---------- */

const bar = (x: number, y: number) =>
  svg`<path d="M${x - 6} ${y}l3 -5l7 -1l3 6l-3 5l-7 1z" fill="#000"/>`;

@customElement("drawing-view")
export class DrawingView extends LitElement {
  static styles = [base, css`
    :host { display: flex; flex-direction: column; min-width: 0; min-height: 0; border-left: 2px solid #7d8494; border-right: 2px solid #7d8494; background: #333a47; }
    .tabs { display: flex; height: 22px; background: #475263; flex: none; align-items: stretch; }
    .tabs button { gap: 7px; justify-content: flex-start; color: #d3d7de; padding-left: 7px; margin-right: 28px; }
    .tabs .on { background: #262d39; color: #fff; font-weight: 700; padding: 0 5px 0 4px; gap: 8px; margin: 0; }
    .tabs .list { margin: 0 4px 0 auto; padding: 0; }
    .middle { flex: 1; display: flex; min-height: 0; }
    .sheet { flex: 1; min-width: 0; position: relative; background: #fff; border-left: 1px solid #2b313d; overflow: hidden; }
    .drawing { display: block; width: 100%; height: 100%; }
    .dims { font: 60px "Liberation Sans", Arial, sans-serif; fill: #fe0000; }
    .note { font: 60px "Liberation Sans", Arial, sans-serif; fill: #111; }
    .wheel { position: absolute; right: 1px; top: 1px; width: 29px; display: flex; flex-direction: column; align-items: center; gap: 5px; padding: 3px 0 2px; background: #f3f3f1; border: 2px solid #d8d8d6; border-radius: 3px; }
    .vscroll { width: 17px; display: flex; flex-direction: column; align-items: center; justify-content: space-between; padding: 6px 0 4px; }
    .vthumb { width: 8px; height: 19px; border-radius: 3px; background: #74809a; }
    .controls { display: flex; align-items: center; height: 20px; flex: none; background: #2f3542; border-bottom: 1px solid #262c37; }
    .icons { display: flex; align-items: center; height: 100%; background: #3c4254; }
    .icons button { width: 25px; }
    .icons .scale { width: 78px; justify-content: flex-start; padding-left: 26px; }
    .icons .back { width: 16px; }
    .hscroll { flex: 1; display: flex; justify-content: center; padding-left: 4px; }
    .hthumb { width: 18px; height: 9px; border-radius: 4px; background: #74809a; }
    .next { width: 24px; }
  `];

  render() {
    const tabIcon = {
      plan: glyph(16, 16, svg`<path d="M1 2h8l2 3h4v10H1z" fill="#6c7686"/><path d="M4 5h4v8H4z" fill="#8791a1"/>`),
      home: glyph(16, 16, svg`<path d="M8 1l7 7h-2v7H3V8H1z" fill="#7c8696"/><path d="M6 9h4v6H6z" fill="#4a5566"/>`),
      cut: glyph(16, 16, svg`<circle cx="7" cy="8" r="5" fill="none" stroke="#7c8696" stroke-width="1.500"/><path d="M8 1l7 7-7 7v-3l3-4-3-4z" fill="#7c8696"/>`),
      detail: glyph(16, 16, svg`<path d="M1 15V4h8v11" fill="none" stroke="#9097a3" stroke-width="1.500" stroke-dasharray="4 1"/><circle cx="12" cy="3" r="3" fill="#a7acb6"/>`),
    };
    return html`
      <nav class="tabs">
        <button>${tabIcon.plan}02NI - Térreo</button>
        <button>${tabIcon.home}3D - Auxílio de modelagem (armad...</button>
        <button>${tabIcon.cut}V9 - Vista lateral</button>
        <button class="on">${tabIcon.detail}V9 - Seção A${glyph(20, 11, svg`<path d="M8 1l8 9M16 1l-8 9" stroke="#c3c7cf" stroke-width="1.500"/>`)}</button>
        <button class="list" aria-label="Lista de vistas">${glyph(8, 8, svg`<path d="M0 1h8" stroke="#99a1af"/><path d="M0 3h8L4 8z" fill="#99a1af"/>`)}</button>
      </nav>
      <div class="middle">
        <div class="sheet">
          <svg class="drawing" viewBox="242 205 1296 827" role="img" aria-label="Seção A da viga V9">
            <path d="M490 412h168v447H490z" fill="#bfbfbf"/>
            <g fill="none" stroke="#f0474b" stroke-width="1.300">
              <path d="M462 309H685M490.500 282V383.500M658.500 282V383.500"/>
              <path d="M477 323l27-27M645 323l27-27"/>
              <path d="M760.500 384V887M686 411.500H787M686 859H787"/>
              <path d="M746 398l28 27M746 846l28 27"/>
            </g>
            <g fill="none" stroke="#707070" stroke-width="5.500">
              <rect x="526.500" y="448" width="95" height="375" rx="10"/>
              <path d="M543 449l33 33.500M528 465l32.500 33"/>
            </g>
            ${bar(535, 457)}${bar(613, 457)}${bar(535, 814)}${bar(613, 814)}
            <g fill="none" stroke="#444" stroke-width="1">
              <rect x="1035.500" y="445.500" width="101" height="380" rx="12"/>
              <rect x="1041.500" y="451.500" width="89" height="368" rx="7"/>
              <path d="M1053 446q4 1 7 4l31 30-4 4-34-33M1041 463l34 33.500-4 4-35-36.500"/>
            </g>
            <g class="dims" text-anchor="middle">
              <text x="575" y="295">15</text>
              <text transform="translate(748 635) rotate(-90)">40</text>
              <text x="1086" y="431">9</text>
              <text x="1086" y="878">9</text>
              <text transform="translate(1024 635) rotate(-90)">34</text>
              <text transform="translate(1191 635) rotate(-90)">34</text>
              <text transform="translate(1104 490) rotate(45)">5</text>
            </g>
            <text class="note" x="735" y="962">35 N3 Ø5.0 c/15 C=93 cm</text>
          </svg>
          <div class="wheel">
            ${glyph(22, 6, svg`<circle cx="19" cy="3" r="2" fill="none" stroke="#b5b5b3"/>`)}
            ${glyph(22, 22, svg`<circle cx="10" cy="10" r="8" fill="none" stroke="#a3a6a9" stroke-width="2"/><circle cx="10" cy="10" r="4" fill="none" stroke="#a3a6a9" stroke-width="1.500"/><path d="M13 16h7v4h-7z" fill="#8ea3c9"/>`)}
            ${glyph(6, 4, svg`<path d="M0 0h6L3 3z" fill="#8c8f93"/>`)}
            ${glyph(24, 1, svg`<path d="M0 .5h24" stroke="#cfcfcd"/>`)}
            ${glyph(18, 16, svg`<path d="M2 1h10v10H2z" fill="#b9c79c"/><circle cx="11" cy="10" r="3" fill="#f3f3f1" stroke="#9ea1a5"/><path d="M13 12l3 3" stroke="#9ea1a5"/>`)}
            ${glyph(6, 4, svg`<path d="M0 0h6L3 3z" fill="#8c8f93"/>`)}
            ${glyph(22, 6, svg`<circle cx="19" cy="3" r="2" fill="none" stroke="#b5b5b3"/>`)}
          </div>
        </div>
        <div class="vscroll">
          ${glyph(10, 7, svg`<path d="M1 6l4-4 4 4" fill="none" stroke="#8b92a3" stroke-width="2"/>`)}
          <i class="vthumb"></i>
          ${glyph(10, 7, svg`<path d="M1 1l4 4 4-4" fill="none" stroke="#8b92a3" stroke-width="2"/>`)}
        </div>
      </div>
      <div class="controls">
        <div class="icons">
          <button class="scale">1 : 25</button>
          ${Object.values(v).map((i) => html`<button aria-label="Controle da vista">${i}</button>`)}
          <button class="back" aria-label="Recuar">${glyph(6, 10, svg`<path d="M5 1L1 5l4 4" fill="none" stroke="#aeb3bf" stroke-width="1.500"/>`)}</button>
        </div>
        <div class="hscroll"><i class="hthumb"></i></div>
        <button class="next" aria-label="Avançar">${glyph(7, 10, svg`<path d="M1 1l4 4-4 4" fill="none" stroke="#8b92a3" stroke-width="2"/>`)}</button>
        ${glyph(14, 10, svg`<path d="M4 8h2M8 8h2M8 4h2" stroke="#8b92a3" stroke-width="2"/>`)}
      </div>`;
  }
}

/* ---------- properties ---------- */

@customElement("properties-panel")
export class PropertiesPanel extends LitElement {
  static styles = [base, css`
    :host { display: flex; flex-direction: column; min-height: 0; overflow: hidden; background: #3e4457; border-left: 3px solid #2b313d; }
    .head { height: 18px; line-height: 18px; background: #222834; padding-left: 3px; flex: none; }
    .type { display: flex; align-items: center; gap: 9px; height: 73px; flex: none; padding: 0 4px; border-top: 1px solid #454b5e; line-height: 17px; }
    .preview { width: 66px; height: 66px; border: 1px solid #474d60; display: grid; place-items: center; flex: none; }
    .pick { display: flex; align-items: center; height: 28px; flex: none; gap: 4px; margin-bottom: 1px; margin-right: -40px; padding-left: 2px; }
    .pick select { appearance: none; flex: none; width: 316px; height: 26px; padding: 0 2px; border-bottom: 2px solid #7a8191; }
    .pick .chev { margin-left: -19px; margin-right: 6px; pointer-events: none; }
    .pick button { gap: 5px; flex: none; }
    .list { flex: 1; min-height: 0; overflow: hidden; }
    .props { width: calc(100% + 12px); height: 100%; border-collapse: collapse; table-layout: fixed; }
    .props th, .props td { padding: 0; text-align: left; font-weight: 400; height: 20px; white-space: nowrap; overflow: hidden; }
    .props .section { background: #222834; color: #fff; font-weight: 700; padding-left: 3px; }
    .props .key { width: 186px; padding: 0 0 0 10px; border-bottom: 1px solid #454b5d; }
    .props .val { padding-left: 2px; border-bottom: 1px solid #454b5d; }
    .off { color: #7b8191; }
    .unit { margin-left: 14px; }
    .pad { padding-left: 4px; }
    .val > select, .val > button { height: 19px; width: 100%; border: 1px solid #6d7485; display: flex; }
    .val > select { appearance: none; border-color: #a0a29f; padding-left: 5px; }
    .val > .left { justify-content: flex-start; padding-left: 4px; }
    .val > .off { border-color: #4d5467; }
    .val > input[type="text"] { width: 100%; height: 18px; display: block; }
    .val > .plain { display: block; }
    .tick { appearance: none; display: grid; place-items: center; width: 13px; height: 13px; margin-left: 2px; border: 1px solid #8b92a1; }
    .tick:checked { background: #b5b9c3; border-color: #b5b9c3; }
    .tick:checked::before { content: ""; width: 7px; height: 4px; border: solid #2f3542; border-width: 0 0 2px 2px; transform: translateY(-1px) rotate(-45deg); }
    .foot { display: flex; align-items: center; gap: 3px; height: 25px; background: #333a47; padding-left: 3px; flex: none; }
    .foot button { width: 21px; height: 21px; }
    .foot .on { background: #2e7390; }
    .foot .dim { background: #3a4050; }
    .foot .apply { margin-left: auto; width: 32px; margin-right: -3px; border: 1px solid #4b5163; color: #6c7282; padding-left: 13px; justify-content: flex-start; overflow: hidden; }
  `];

  private cell(x: Prop, id: string) {
    switch (x.kind) {
      case "select": return html`<select id=${id}><option>${x.value}</option></select>`;
      case "button": return html`<button id=${id} class=${classMap({ off: !!x.off })}>${x.value}</button>`;
      case "left": return html`<button id=${id} class="left">${x.value}</button>`;
      case "check": return html`<input id=${id} class="tick" type="checkbox" ?checked=${!!x.on} />`;
      case "input": return html`<input id=${id} type="text" .value=${x.value ?? ""} />`;
      default: return html`<span class="plain"><span class=${classMap({ pad: !!x.pad })}>${x.value}</span></span>`;
    }
  }

  render() {
    const sort = (a: string, b: string) => glyph(16, 20, svg`
      <text x="4" y="9" text-anchor="middle" font-family="Open Sans, sans-serif" font-size="8" font-weight="600" fill="#a9cbe6">${a}</text>
      <text x="4" y="18" text-anchor="middle" font-family="Open Sans, sans-serif" font-size="8" font-weight="600" fill="#c9cdd3">${b}</text>
      <path d="M12 3v12" stroke="#c9cdd3" stroke-width="1.500"/><path d="M9 13h6l-3 4z" fill="#c9cdd3"/>`);
    return html`
      <div class="head">Propriedades</div>
      <div class="type">
        <div class="preview">${glyph(36, 36, svg`<path d="M18 11H9l-5 5v12l4 5h10l4-5V15" fill="none" stroke="#6c7282" stroke-width="1.500" stroke-dasharray="5 2"/><circle cx="27" cy="8" r="6" fill="none" stroke="#7f8594"/><path d="M14 12l7-3M19 8h16M27 1v13" stroke="#7f8594"/>`)}</div>
        <div>Vista em detalhe<br />Detalhamento de vigas (seção)</div>
      </div>
      <div class="pick">
        <select aria-label="Vista"><option>Vista em detalhe: V9 - Seção A</option></select>
        <span class="chev">${glyph(8, 6, svg`<path d="M1 1l3 3 3-3" fill="none" stroke="#7a8191" stroke-width="1.500"/>`)}</span>
        <button>${glyph(14, 14, svg`<path d="M0 0h6v6H0zM0 8h6v6H0z" fill="#dfe1e5"/><path d="M8 0h6v3H8zM8 5h6v3H8zM8 10h6v4H8z" fill="#b5b9c3"/>`)}Editar tipo</button>
      </div>
      <div class="list">
        <table class="props">
          <colgroup><col class="key" /><col /></colgroup>
          ${PROPS.map((g, gi) => html`
            <tbody>
              <tr><th class="section" colspan="2">${g.title}</th></tr>
              ${g.rows.map((x, i) => {
                const id = `p${gi}-${i}`;
                const tied = x.kind && x.kind !== "text";
                return html`<tr class=${classMap({ off: !!x.off })}>
                  <th class="key" scope="row">${tied ? html`<label for=${id}>${x.name}</label>` : x.name}${x.unit ? html`<span class="unit">${x.unit}</span>` : nothing}</th>
                  <td class="val">${this.cell(x, id)}</td>
                </tr>`;
              })}
            </tbody>`)}
        </table>
      </div>
      <div class="foot">
        <button class="on" aria-label="Por categoria">${glyph(16, 16, svg`<path d="M1 4h8M1 8h8M1 12h8" stroke="#d6e4ec"/><path d="M13 2v5M13 9v5" stroke="#fff" stroke-width="1.500"/><circle cx="13" cy="4" r="2" fill="#fff"/><circle cx="13" cy="12" r="2" fill="#fff"/>`)}</button>
        <button class="dim" aria-label="Crescente">${sort("A", "Z")}</button>
        <button class="dim" aria-label="Decrescente">${sort("Z", "A")}</button>
        <button class="apply" disabled>Aplicar</button>
      </div>`;
  }
}

/* ---------- page ---------- */

@customElement("app-root")
export class AppRoot extends LitElement {
  static styles = [base, css`
    :host { display: block; }
    .app { display: grid; grid-template-rows: auto minmax(0, 1fr) 27px; height: 100vh; overflow: hidden; background: #2b313d; }
    .work { display: grid; grid-template-columns: 239px minmax(0, 1fr) 363px; min-height: 0; }
    .status { display: flex; align-items: center; background: #3e4457; padding-top: 3px; border-bottom: 2px solid #272d39; overflow: hidden; white-space: nowrap; }
    .hint { flex: 1; margin-left: -2px; }
    .mid { display: flex; align-items: center; flex: none; width: 803px; }
    .mid .drop { margin-left: 210px; margin-right: 10px; }
    .mid .count { color: #8f95a2; margin-right: 20px; }
    .mid .off { margin: 0 8px; }
    .mid .design { appearance: none; width: 200px; color: #6f7585; border-bottom: 1px solid #4b5164; }
    .sel { display: flex; align-items: center; gap: 5px; flex: none; padding-right: 20px; color: #b5b9c3; }
    .sel .tally { margin-left: -6px; }
  `];

  render() {
    const chev = glyph(8, 6, svg`<path d="M1 1l3 3 3-3" fill="none" stroke="#5f6576" stroke-width="1.500"/>`);
    return html`
      <div class="app">
        <top-bar></top-bar>
        <main class="work">
          <project-browser></project-browser>
          <drawing-view></drawing-view>
          <properties-panel></properties-panel>
        </main>
        <footer class="status">
          <div class="hint">para selecionar, TAB para alternativas, CTRL adiciona, SHIFT cancela a seleção.</div>
          <div class="mid">
            ${s.people}<span class="drop">${chev}</span>${s.figure}<span class="count">:0</span>
            ${s.sheet}<span class="off">${s.sheetOff}</span>
            <select class="design" aria-label="Opção de projeto"><option>Modelo principal</option></select>${chev}
          </div>
          <div class="sel">
            ${[s.links, s.under, s.pinned, s.face, s.drag, s.ring, s.funnel].map((i) => html`<button aria-label="Seleção">${i}</button>`)}
            <span class="tally">:0</span>
          </div>
        </footer>
      </div>`;
  }
}
